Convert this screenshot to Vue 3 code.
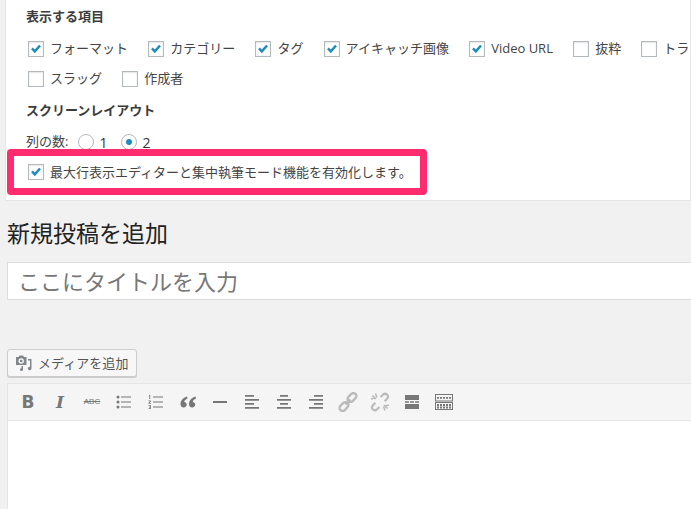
<script setup>
const row1 = [
  { t: 'フォーマット', c: true }, { t: 'カテゴリー', c: true }, { t: 'タグ', c: true },
  { t: 'アイキャッチ画像', c: true }, { t: 'Video URL', c: true }, { t: '抜粋', c: false }, { t: 'トラックバック送信', c: false },
]
const row2 = [{ t: 'スラッグ', c: false }, { t: '作成者', c: false }]
</script>

<template>
  <div class="page">
    <section class="panel">
      <h5 class="head">表示する項目</h5>
      <div class="row first">
        <label v-for="i in row1" :key="i.t" class="opt">
          <span class="box"><svg v-if="i.c" viewBox="0 0 16 16" width="15" height="15"><path d="M2.4 7.6 L4.3 5.7 L6.6 8 L11.6 2.6 L13.6 4.4 L6.7 12.4 Z" fill="#1e8cbe"/></svg></span>
          <span class="lbl">{{ i.t }}</span>
        </label>
      </div>
      <div class="row second">
        <label v-for="i in row2" :key="i.t" class="opt">
          <span class="box"></span>
          <span class="lbl">{{ i.t }}</span>
        </label>
      </div>
      <h5 class="head layout">スクリーンレイアウト</h5>
      <div class="cols">
        <span class="cols-label">列の数:</span>
        <span class="radio"></span><span class="num">1</span>
        <span class="radio on"><i></i></span><span class="num">2</span>
      </div>
      <div class="mark">
        <span class="box"><svg viewBox="0 0 16 16" width="15" height="15"><path d="M2.4 7.6 L4.3 5.7 L6.6 8 L11.6 2.6 L13.6 4.4 L6.7 12.4 Z" fill="#1e8cbe"/></svg></span>
        <span class="mark-text">最大行表示エディターと集中執筆モード機能を有効化します。</span>
      </div>
    </section>

    <h1 class="title">新規投稿を追加</h1>
    <div class="title-input">ここにタイトルを入力</div>

    <button class="media">
      <svg width="18" height="18" viewBox="0 0 18 18" fill="#82878c">
        <path fill-rule="evenodd" d="M1 3h2.500l1-1.500h3.500l1 1.500h2.500v8H1zM6.200 4.300a2.700 2.700 0 1 0 0 5.400 2.700 2.700 0 0 0 0-5.400z"/>
        <circle cx="6.200" cy="7" r="1.300"/>
        <path d="M13 5h3.500v9.500a1.800 1.800 0 1 1-1.500-1.800V6.500h-2zM6.500 12h1.500v3.500a1.500 1.500 0 1 1-1.500-1.500z"/>
      </svg>
      <span class="media-text">メディアを追加</span>
    </button>

    <div class="editor">
      <div class="toolbar">
        <span class="tool tb">B</span>
        <span class="tool ti">I</span>
        <span class="tool tabc">ABC</span>
        <svg width="20" height="20" viewBox="0 0 20 20" fill="#777"><circle cx="4" cy="5" r="1.500"/><circle cx="4" cy="10" r="1.500"/><circle cx="4" cy="15" r="1.500"/><path d="M7 4.400h10v1.200H7zM7 9.400h10v1.200H7zM7 14.400h10v1.200H7z"/></svg>
        <svg width="20" height="20" viewBox="0 0 20 20" fill="#777"><path d="M7 4.400h10v1.200H7zM7 9.400h10v1.200H7zM7 14.400h10v1.200H7zM3 3h1.200v4h-.9V4H3zM2.500 8.500h2.400v1l-1.400 1.500h1.400v.8H2.500v-.9l1.500-1.600H2.500zM2.500 13h2.400v4H2.500v-.7h1.600v-.9H3v-.7h1.100v-.9H2.500z"/></svg>
        <svg width="20" height="20" viewBox="0 0 20 20" fill="#777"><path d="M9 4.500C5 5.800 2.500 8.500 2.500 12c0 2.200 1.300 3.500 3.200 3.500 1.700 0 3-1.200 3-2.900 0-1.600-1.100-2.700-2.500-2.700.3-1.300 1.400-2.500 3.300-3.300zM17.500 4.500C13.500 5.800 11 8.500 11 12c0 2.200 1.300 3.500 3.200 3.500 1.700 0 3-1.200 3-2.900 0-1.600-1.100-2.700-2.500-2.700.3-1.300 1.400-2.500 3.300-3.300z"/></svg>
        <svg width="20" height="20" viewBox="0 0 20 20" fill="#777"><path d="M3 9h14v2H3z"/></svg>
        <svg width="20" height="20" viewBox="0 0 20 20" fill="#777"><path d="M3 3h9v1.800H3zM3 7h14v1.800H3zM3 11h9v1.800H3zM3 15h14v1.800H3z"/></svg>
        <svg width="20" height="20" viewBox="0 0 20 20" fill="#777"><path d="M6 3h8v1.800H6zM3 7h14v1.800H3zM6 11h8v1.800H6zM3 15h14v1.800H3z"/></svg>
        <svg width="20" height="20" viewBox="0 0 20 20" fill="#777"><path d="M8 3h9v1.800H8zM3 7h14v1.800H3zM8 11h9v1.800H8zM3 15h14v1.800H3z"/></svg>
        <svg width="20" height="20" viewBox="0 0 20 20" fill="none" stroke="#bbb" stroke-width="2.400"><rect x="9" y="2.500" width="10" height="6" rx="3" transform="rotate(-45 14 5.500)"/><rect x="1" y="11.500" width="10" height="6" rx="3" transform="rotate(-45 6 14.500)"/><path d="M7.500 12.500l5-5"/></svg>
        <svg width="20" height="20" viewBox="0 0 20 20" fill="none" stroke="#bbb" stroke-width="2.200"><path d="M10.500 5l2.500-2.300c1.500-1.300 3-1.100 4.200 0s1.200 2.700-.2 4.100l-2.300 2.400M9.500 15l-2.500 2.300c-1.500 1.300-3 1.100-4.200 0s-1.200-2.700.2-4.100l2.300-2.400" /><path stroke-width="1.600" d="M2.500 3.500l3.500 3.500M5.500 1.500l1.500 4M1 7l4-1M14 13l3.500 3.500M15 18.500l-1.500-4M19 13l-4 1"/></svg>
        <svg width="20" height="20" viewBox="0 0 20 20" fill="#777"><path d="M3 3h14v5H3zM3 9.200h4v1.600H3zM8 9.200h4v1.600H8zM13 9.200h4v1.600h-4zM3 12h14v5H3z"/></svg>
        <svg width="20" height="20" viewBox="0 0 20 20" fill="none" stroke="#777" stroke-width="1"><rect x="1.500" y="2.500" width="17" height="6.500"/><rect x="1.500" y="10.500" width="17" height="7"/><path stroke-width="1.800" stroke-dasharray="2 1" d="M3 5.800h14M3 13h14M3 15.500h14"/></svg>
      </div>
      <div class="area"></div>
    </div>
  </div>
</template>

<style scoped>
.page {
  height: 509px;
  overflow: hidden;
  background: #f1f1f1;
  color: #444;
  font-family: "Open Sans", "Noto Sans CJK JP", sans-serif;
  font-size: 13px;
  box-sizing: border-box;
}
.panel {
  margin-left: 5px;
  height: 201px;
  box-sizing: border-box;
  background: #fff;
  border: 1px solid #e5e5e5;
  border-top: 0;
  padding: 0 0 0 20px;
  white-space: nowrap;
  overflow: hidden;
}
.head {
  margin: 0;
  padding-top: 7px;
  line-height: 18px;
  font-size: 13px;
  font-weight: 700;
  color: #3c3c3c;
}
.row {
  display: flex;
  gap: 20.200px;
  margin-left: 2px;
}
.first { margin-top: 16px; }
.second { margin-top: 14px; }
.opt {
  display: flex;
  align-items: center;
  gap: 6px;
  height: 16px;
  flex: none;
}
.lbl { padding-bottom: 3px; }
.box {
  flex: none;
  width: 16px;
  height: 16px;
  box-sizing: border-box;
  border: 1px solid #b4b9be;
  background: #fff;
  display: flex;
  align-items: center;
  justify-content: center;
  box-shadow: inset 0 1px 2px rgba(0, 0, 0, .1);
}
.layout { padding-top: 5px; margin-top: 9px; }
.cols {
  display: flex;
  align-items: center;
  height: 16px;
  margin-top: 15px;
}
.cols-label { margin-right: 10px; position: relative; top: -2px; }
.radio {
  width: 16px;
  height: 16px;
  box-sizing: border-box;
  border: 1px solid #b4b9be;
  border-radius: 50%;
  display: flex;
  align-items: center;
  justify-content: center;
  margin-right: 5px;
}
.radio i {
  width: 6px;
  height: 6px;
  border-radius: 50%;
  background: #1e8cbe;
}
.num { margin-right: 14px; font-size: 14px; color: #333; }
.mark {
  position: relative;
  margin: -1px 0 0 -19px;
  width: 420px;
  height: 46px;
  box-sizing: border-box;
  border: 7px solid #ff2d6f;
  border-radius: 4px;
  background: #fff;
  padding-left: 14px;
  display: flex;
  align-items: center;
  gap: 6px;
}
.mark-text { padding-bottom: 1px; }
.title {
  margin: 0;
  padding: 19px 0 0 7px;
  font-size: 23px;
  line-height: 27px;
  font-weight: 400;
  color: #222;
}
.title-input {
  margin: 15px 0 0 7px;
  height: 38px;
  box-sizing: border-box;
  border: 1px solid #ddd;
  border-right: 0;
  background: #fff;
  font-size: 22px;
  line-height: 36px;
  padding-left: 10px;
  color: #777;
}
.media {
  display: flex;
  align-items: center;
  gap: 5px;
  margin: 49px 0 0 7px;
  height: 28px;
  width: 130px;
  box-sizing: border-box;
  padding: 0 0 0 7px;
  background: #f7f7f7;
  border: 1px solid #ccc;
  border-radius: 3px;
  box-shadow: 0 1px 0 #ccc;
  font: inherit;
  font-size: 13px;
  color: #555;
}
.media-text { padding-bottom: 2px; letter-spacing: .05px; }
.editor {
  margin: 6px 0 0 7px;
  border: 1px solid #e5e5e5;
  border-right: 0;
}
.toolbar {
  height: 37px;
  box-sizing: border-box;
  background: #f5f5f5;
  border-bottom: 1px solid #e5e5e5;
  display: flex;
  align-items: center;
  gap: 12px;
  padding-left: 10px;
}
.tool {
  flex: none;
  width: 20px;
  height: 20px;
  line-height: 20px;
  text-align: center;
  color: #777;
}
.tb { font: 700 17px/20px "DejaVu Sans", sans-serif; }
.ti { font: italic 700 17px/20px "DejaVu Serif", serif; }
.tabc {
  font: 8px/20px "Liberation Sans", sans-serif;
  text-decoration: line-through;
}
.area {
  height: 100px;
  background: #fff;
}
</style>
